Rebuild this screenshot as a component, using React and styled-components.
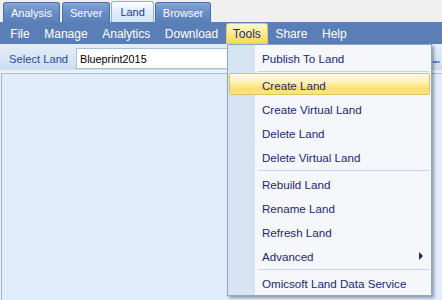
import React from "react";
import styled, { createGlobalStyle } from "styled-components";

const Global = createGlobalStyle`
  html, body { margin: 0; padding: 0; background: #f0f0f0; }
  * { box-sizing: border-box; }
`;

const Window = styled.div`
  position: relative;
  width: 442px;
  height: 300px;
  overflow: hidden;
  background: #f0f0f0;
  font-family: "Liberation Sans", Arial, sans-serif;
  display: flex;
  flex-direction: column;
`;

const TabStrip = styled.div`
  display: flex;
  align-items: flex-end;
  gap: 2px;
  height: 22px;
  padding-left: 3px;
`;

const Tab = styled.div`
  height: ${(p) => (p.$active ? "21px" : "20px")};
  padding: 0 ${(p) => (p.$active ? "8px" : "7px")};
  margin: 0 ${(p) => (p.$active ? "-1px" : "0")};
  display: flex;
  align-items: center;
  font-size: 11px;
  border: 1px solid ${(p) => (p.$active ? "#8eaedb" : "#4a6fa8")};
  border-bottom: none;
  border-radius: 3px 3px 0 0;
  color: ${(p) => (p.$active ? "#1d3b86" : "#ffffff")};
  background: ${(p) =>
    p.$active
      ? "linear-gradient(#ffffff, #e3edfa 45%, #d6e5f8)"
      : "linear-gradient(#86a6d6, #6a8fc7 45%, #5a80bb)"};
  position: relative;
  z-index: ${(p) => (p.$active ? 1 : 0)};
`;

const MenuBar = styled.div`
  display: flex;
  align-items: center;
  height: 22px;
  padding-left: 3px;
  background: #5a7fb6;
`;

const MenuItem = styled.div`
  height: 21px;
  margin-top: 1px;
  padding: 0 6.3px;
  display: flex;
  align-items: center;
  font-size: 12px;
  color: ${(p) => (p.$open ? "#1d2c6e" : "#ffffff")};
  border: 1px solid ${(p) => (p.$open ? "#e6c766" : "transparent")};
  border-bottom: none;
  border-radius: 3px 3px 0 0;
  background: ${(p) =>
    p.$open ? "linear-gradient(#fdf6cf, #fbe98e 50%, #f6d653)" : "transparent"};
`;

const Toolbar = styled.div`
  display: flex;
  align-items: center;
  height: 26px;
  padding: 4px 0 1px 9px;
  background: linear-gradient(#e6eef9, #d9e6f6 50%, #cbdcf1);
`;

const Label = styled.span`
  font-size: 11.2px;
  color: #2a4a92;
  width: 67px;
  flex: none;
`;

const Input = styled.div`
  flex: 1;
  height: 21px;
  border: 1px solid #a9c0e0;
  background: #ffffff;
  font-size: 10.8px;
  color: #000;
  display: flex;
  align-items: center;
  padding-left: 3px;
`;

const Ellipsis = styled.span`
  width: 11px;
  flex: none;
  font-size: 12px;
  font-weight: bold;
  color: #3a68ae;
  letter-spacing: -1px;
  padding-left: 1px;
`;

const Content = styled.div`
  flex: 1;
  margin: 3px 0 0 1px;
  border-top: 1px solid #a8c1e2;
  border-left: 1px solid #9bb6dd;
  background: #e1edfd;
`;

const Dropdown = styled.div`
  position: absolute;
  left: 227px;
  top: 44px;
  width: 205px;
  height: 252px;
  border: 1px solid #8ea9cf;
  padding: 1px 0 0;
  background: linear-gradient(to right, #d5e3f3 0 27px, #f5f7fa 27px);
  box-shadow: 2px 2px 3px rgba(60, 70, 90, 0.5);
  display: flex;
  flex-direction: column;
  z-index: 5;
`;

const DropItem = styled.div`
  position: relative;
  height: 24px;
  flex: none;
  display: flex;
  align-items: center;
  padding-left: 34px;
  font-size: 11.6px;
  color: #1b2870;
  &::before {
    content: "";
    display: ${(p) => (p.$hover ? "block" : "none")};
    position: absolute;
    left: 1px;
    right: 1px;
    top: 0;
    bottom: 2px;
    border: 1px solid #e4c05a;
    border-radius: 2px;
    background: linear-gradient(#fffbe6, #fdf0b0 45%, #fbe06a 70%, #f8e48e);
  }
`;

const ItemText = styled.span`
  position: relative;
`;

const SubArrow = styled.span`
  position: absolute;
  right: 8px;
  top: 8px;
  width: 0;
  height: 0;
  border-top: 4px solid transparent;
  border-bottom: 4px solid transparent;
  border-left: 4px solid #1b2870;
`;

const Separator = styled.div`
  height: 3px;
  flex: none;
  margin: 0 2px 0 30px;
  padding-top: 1px;
  &::after {
    content: "";
    display: block;
    height: 1px;
    background: #c7d4e3;
  }
`;

const tabs = ["Analysis", "Server", "Land", "Browser"];
const menus = ["File", "Manage", "Analytics", "Download", "Tools", "Share", "Help"];
const items = [
  ["Publish To Land"],
  "sep",
  ["Create Land", "hover"],
  ["Create Virtual Land"],
  ["Delete Land"],
  ["Delete Virtual Land"],
  "sep",
  ["Rebuild Land"],
  ["Rename Land"],
  ["Refresh Land"],
  ["Advanced", "sub"],
  "sep",
  ["Omicsoft Land Data Service"],
];

export default function App() {
  return (
    <>
      <Global />
      <Window>
        <TabStrip>
          {tabs.map((t) => (
            <Tab key={t} $active={t === "Land"}>
              {t}
            </Tab>
          ))}
        </TabStrip>
        <MenuBar>
          {menus.map((m) => (
            <MenuItem key={m} $open={m === "Tools"}>
              {m}
            </MenuItem>
          ))}
        </MenuBar>
        <Toolbar>
          <Label>Select Land</Label>
          <Input>Blueprint2015</Input>
          <Ellipsis>...</Ellipsis>
        </Toolbar>
        <Content />
        <Dropdown>
          {items.map((it, i) =>
            it === "sep" ? (
              <Separator key={i} />
            ) : (
              <DropItem key={i} $hover={it[1] === "hover"}>
                <ItemText>{it[0]}</ItemText>
                {it[1] === "sub" && <SubArrow />}
              </DropItem>
            )
          )}
        </Dropdown>
      </Window>
    </>
  );
}
